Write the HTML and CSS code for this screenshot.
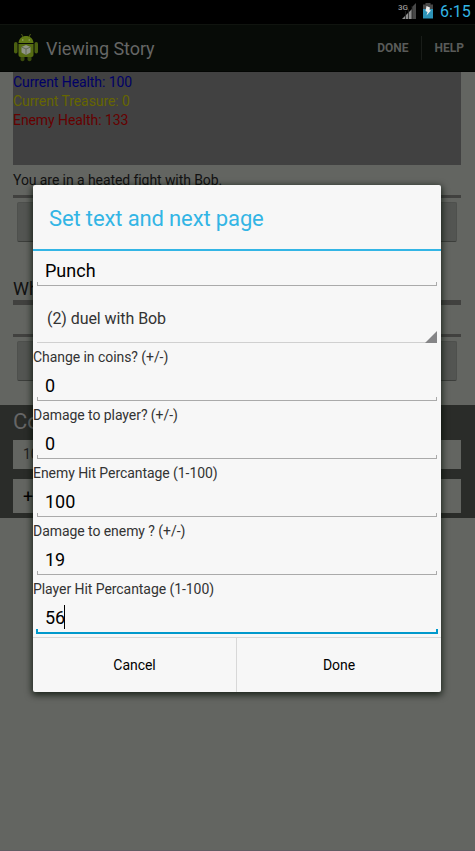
FILE: index.html
```html
<!DOCTYPE html>
<html lang="en">
<head>
<meta charset="utf-8">
<title>Viewing Story</title>
<link rel="stylesheet" href="styles.css">
</head>
<body>
<div class="screen">
  <header class="status">
    <svg class="signal" width="20" height="18" viewBox="0 0 20 18">
      <text class="net" x="0" y="7">3G</text>
      <path fill="#8e8e8e" d="M4 16L14 6V16Z"/>
      <path fill="#484848" d="M14 4L18 0V16H14Z"/>
      <path stroke="#222" stroke-width=".8" d="M7.500 8V16M10.500 6V16M14 3V16"/>
    </svg>
    <svg class="battery" width="10" height="16" viewBox="0 0 10 16">
      <path fill="#484848" d="M0 1.500H2.500V0H7.500V1.500H10V7H0Z"/>
      <path fill="#2d93b8" d="M0 6H10V15.500H0Z"/>
      <path fill="#eee" d="M3.500 3L7 4.500L6.500 7L8 7.500L3.500 12.500L4.500 9L2.500 8Z"/>
    </svg>
    <span class="clock">6:15</span>
  </header>
  <nav class="bar">
    <svg class="robot" width="24" height="30" viewBox="0 0 24 30">
      <path stroke="#4c5c16" stroke-width="1" d="M7.500 1L9 4M16.500 1L15 4"/>
      <path fill="#607914" d="M4.500 10C5 0.500 19 0.500 19.500 10Z"/>
      <path fill="#566c12" d="M4.500 11H19.500V22Q19.500 24 17.500 24H6.500Q4.500 24 4.500 22Z"/>
      <rect x="0" y="9" width="3.500" height="11.500" rx="1.700" fill="#4b6010"/>
      <rect x="20.500" y="9" width="3.500" height="11.500" rx="1.700" fill="#4b6010"/>
      <path fill="#3b4c0d" d="M6.500 24H10.500V27Q8.500 29.500 6.500 27ZM13.500 24H17.500V27Q15.500 29.500 13.500 27Z"/>
      <circle cx="8.800" cy="7" r=".7" fill="#a0a880"/><circle cx="15.200" cy="7" r=".7" fill="#a0a880"/>
      <path fill="#8f9487" d="M12 12L16.500 14V19.500L12 22L7.500 19.500V14Z"/>
      <path fill="none" stroke="#566044" stroke-width=".8" d="M7.500 14L12 16L16.500 14M12 16V22"/>
    </svg>
    <h1 class="bar-title">Viewing Story</h1>
    <span class="action">DONE</span>
    <i class="split"></i>
    <span class="action help">HELP</span>
  </nav>
  <main class="page">
    <section class="stats">
      <p class="health">Current Health: 100</p>
      <p class="treasure">Current Treasure: 0</p>
      <p class="enemy">Enemy Health: 133</p>
    </section>
    <p class="story">You are in a heated fight with Bob.</p>
    <hr class="rule">
    <div class="choice"></div>
    <h2 class="what">What</h2>
    <hr class="rule thick">
    <hr class="rule lower">
    <div class="choice"></div>
    <section class="compose">
      <h2 class="compose-title">Co</h2>
      <div class="entry">10</div>
      <div class="entry add">+</div>
    </section>
  </main>
  <div class="dialog">
    <h2 class="title">Set text and next page</h2>
    <div class="field first">Punch</div>
    <div class="spinner">(2) duel with Bob</div>
    <label>Change in coins? (+/-)</label>
    <div class="field">0</div>
    <label>Damage to player? (+/-)</label>
    <div class="field">0</div>
    <label>Enemy Hit Percantage (1-100)</label>
    <div class="field">100</div>
    <label>Damage to enemy ? (+/-)</label>
    <div class="field">19</div>
    <label>Player Hit Percantage (1-100)</label>
    <div class="field focus">56<i class="caret"></i></div>
    <footer class="buttons">
      <div class="btn">Cancel</div>
      <div class="btn done">Done</div>
    </footer>
  </div>
</div>
</body>
</html>
```

FILE: styles.css
```css
* { box-sizing: border-box; margin: 0; padding: 0; }
body { background: #636561; font-family: Roboto, "Liberation Sans", sans-serif; font-weight: 400; }
h1, h2 { font-weight: 400; }
.screen { position: relative; width: 475px; height: 851px; overflow: hidden; background: #636561; border-bottom: 1px solid #615d63; }
.status { height: 24px; background: #000; display: flex; align-items: flex-start; justify-content: flex-end; padding: 3px 4px 0 0; }
.signal { margin-right: 5px; }
.net { font-size: 8px; font-weight: 500; fill: #999; }
.battery { margin-right: 7px; }
.clock { font-size: 16px; line-height: 18px; color: #33b5e5; width: 31px; white-space: nowrap; }
.bar { height: 48px; background: #070b07; border-top: 1px solid #10140f; border-bottom: 1px solid #030503; display: flex; align-items: center; padding-left: 14px; }
.bar-title { margin-left: 8px; font-size: 18px; letter-spacing: -.05px; color: #656665; flex: 1; }
.action { font-size: 12px; font-weight: 700; color: #595b59; }
.split { width: 1px; height: 24px; background: #191d19; margin: 0 13px 0 12px; }
.help { margin-right: 11px; }
.page { font-size: 14px; line-height: 19px; letter-spacing: -.08px; }
.stats { margin: 0 14px 0 13px; height: 93px; background: #414141; padding-top: 1px; }
.health { color: #000066; }
.treasure { color: #666600; }
.enemy { color: #660000; }
.story { margin: 6px 13px 5px; color: #111; }
.rule { border: 0; height: 3px; background: #41413f; margin: 0 14px 0 13px; }
.choice { margin: 4px 18px 0 17px; height: 40px; border: 1px solid #4e504d; border-bottom-color: #3c3e3b; border-radius: 2px; background: #535552; }
.what { margin: 36px 13px 0; font-size: 18px; line-height: 22px; color: #111; }
.thick { height: 5px; }
.lower { margin-top: 29px; }
.compose { margin-top: 24px; height: 113px; background: #2a2c29; padding: 4px 14px 5px 13px; }
.compose-title { width: 20px; overflow: hidden; font-size: 22px; line-height: 26px; height: 31px; color: #666; }
.entry { height: 29px; background: #636561; padding: 5px 10px; color: #222; }
.add { height: 34px; margin-top: 10px; padding-top: 8px; color: #000; font-size: 18px; }
.dialog { position: absolute; left: 33px; top: 185px; width: 408px; height: 507px; background: #f7f7f7; border-radius: 2px; box-shadow: 0 2px 7px 1px rgba(0,12,0,.75); color: #000; }
.title { height: 66px; border-bottom: 2px solid #33b5e5; padding: 4px 16px 0; font-size: 22px; line-height: 60px; letter-spacing: -.13px; color: #33b5e5; }
.field { position: relative; height: 34px; margin: 0 4px 5px; padding-left: 8px; font-size: 18px; line-height: 38px; border-bottom: 1px solid #aaa; }
.field::after { content: ""; position: absolute; left: 0; right: 0; bottom: 0; height: 3px; border: 1px solid #aaa; border-width: 0 1px; }
.field.first { height: 35px; line-height: 39px; margin-bottom: 0; }
.spinner { position: relative; height: 57px; margin: 0 4px 5px; padding-left: 10px; font-size: 16px; line-height: 66px; letter-spacing: -.07px; color: #333; border-bottom: 1px solid #d0d0d0; }
.spinner::after { content: ""; position: absolute; right: 0; bottom: -1px; width: 12px; height: 12px; background: #858587; clip-path: polygon(100% 0, 100% 100%, 0 100%); }
label { display: block; height: 19px; font-size: 14px; line-height: 19px; letter-spacing: -.06px; color: #333; }
.field.focus { margin: 0 3px 3px; height: 35px; padding-left: 9px; border-bottom: 2px solid #0099cc; }
.focus::after { border-color: #0099cc; border-width: 0 2px; height: 3px; }
.caret { position: absolute; left: 28px; top: 6px; width: 1px; height: 24px; background: #000; }
.buttons { display: flex; height: 55px; border-top: 1px solid #d8d8d8; font-size: 14px; line-height: 54px; letter-spacing: -.05px; text-align: center; }
.btn { width: 203px; }
.done { flex: 1; border-left: 1px solid #d8d8d8; }
```
